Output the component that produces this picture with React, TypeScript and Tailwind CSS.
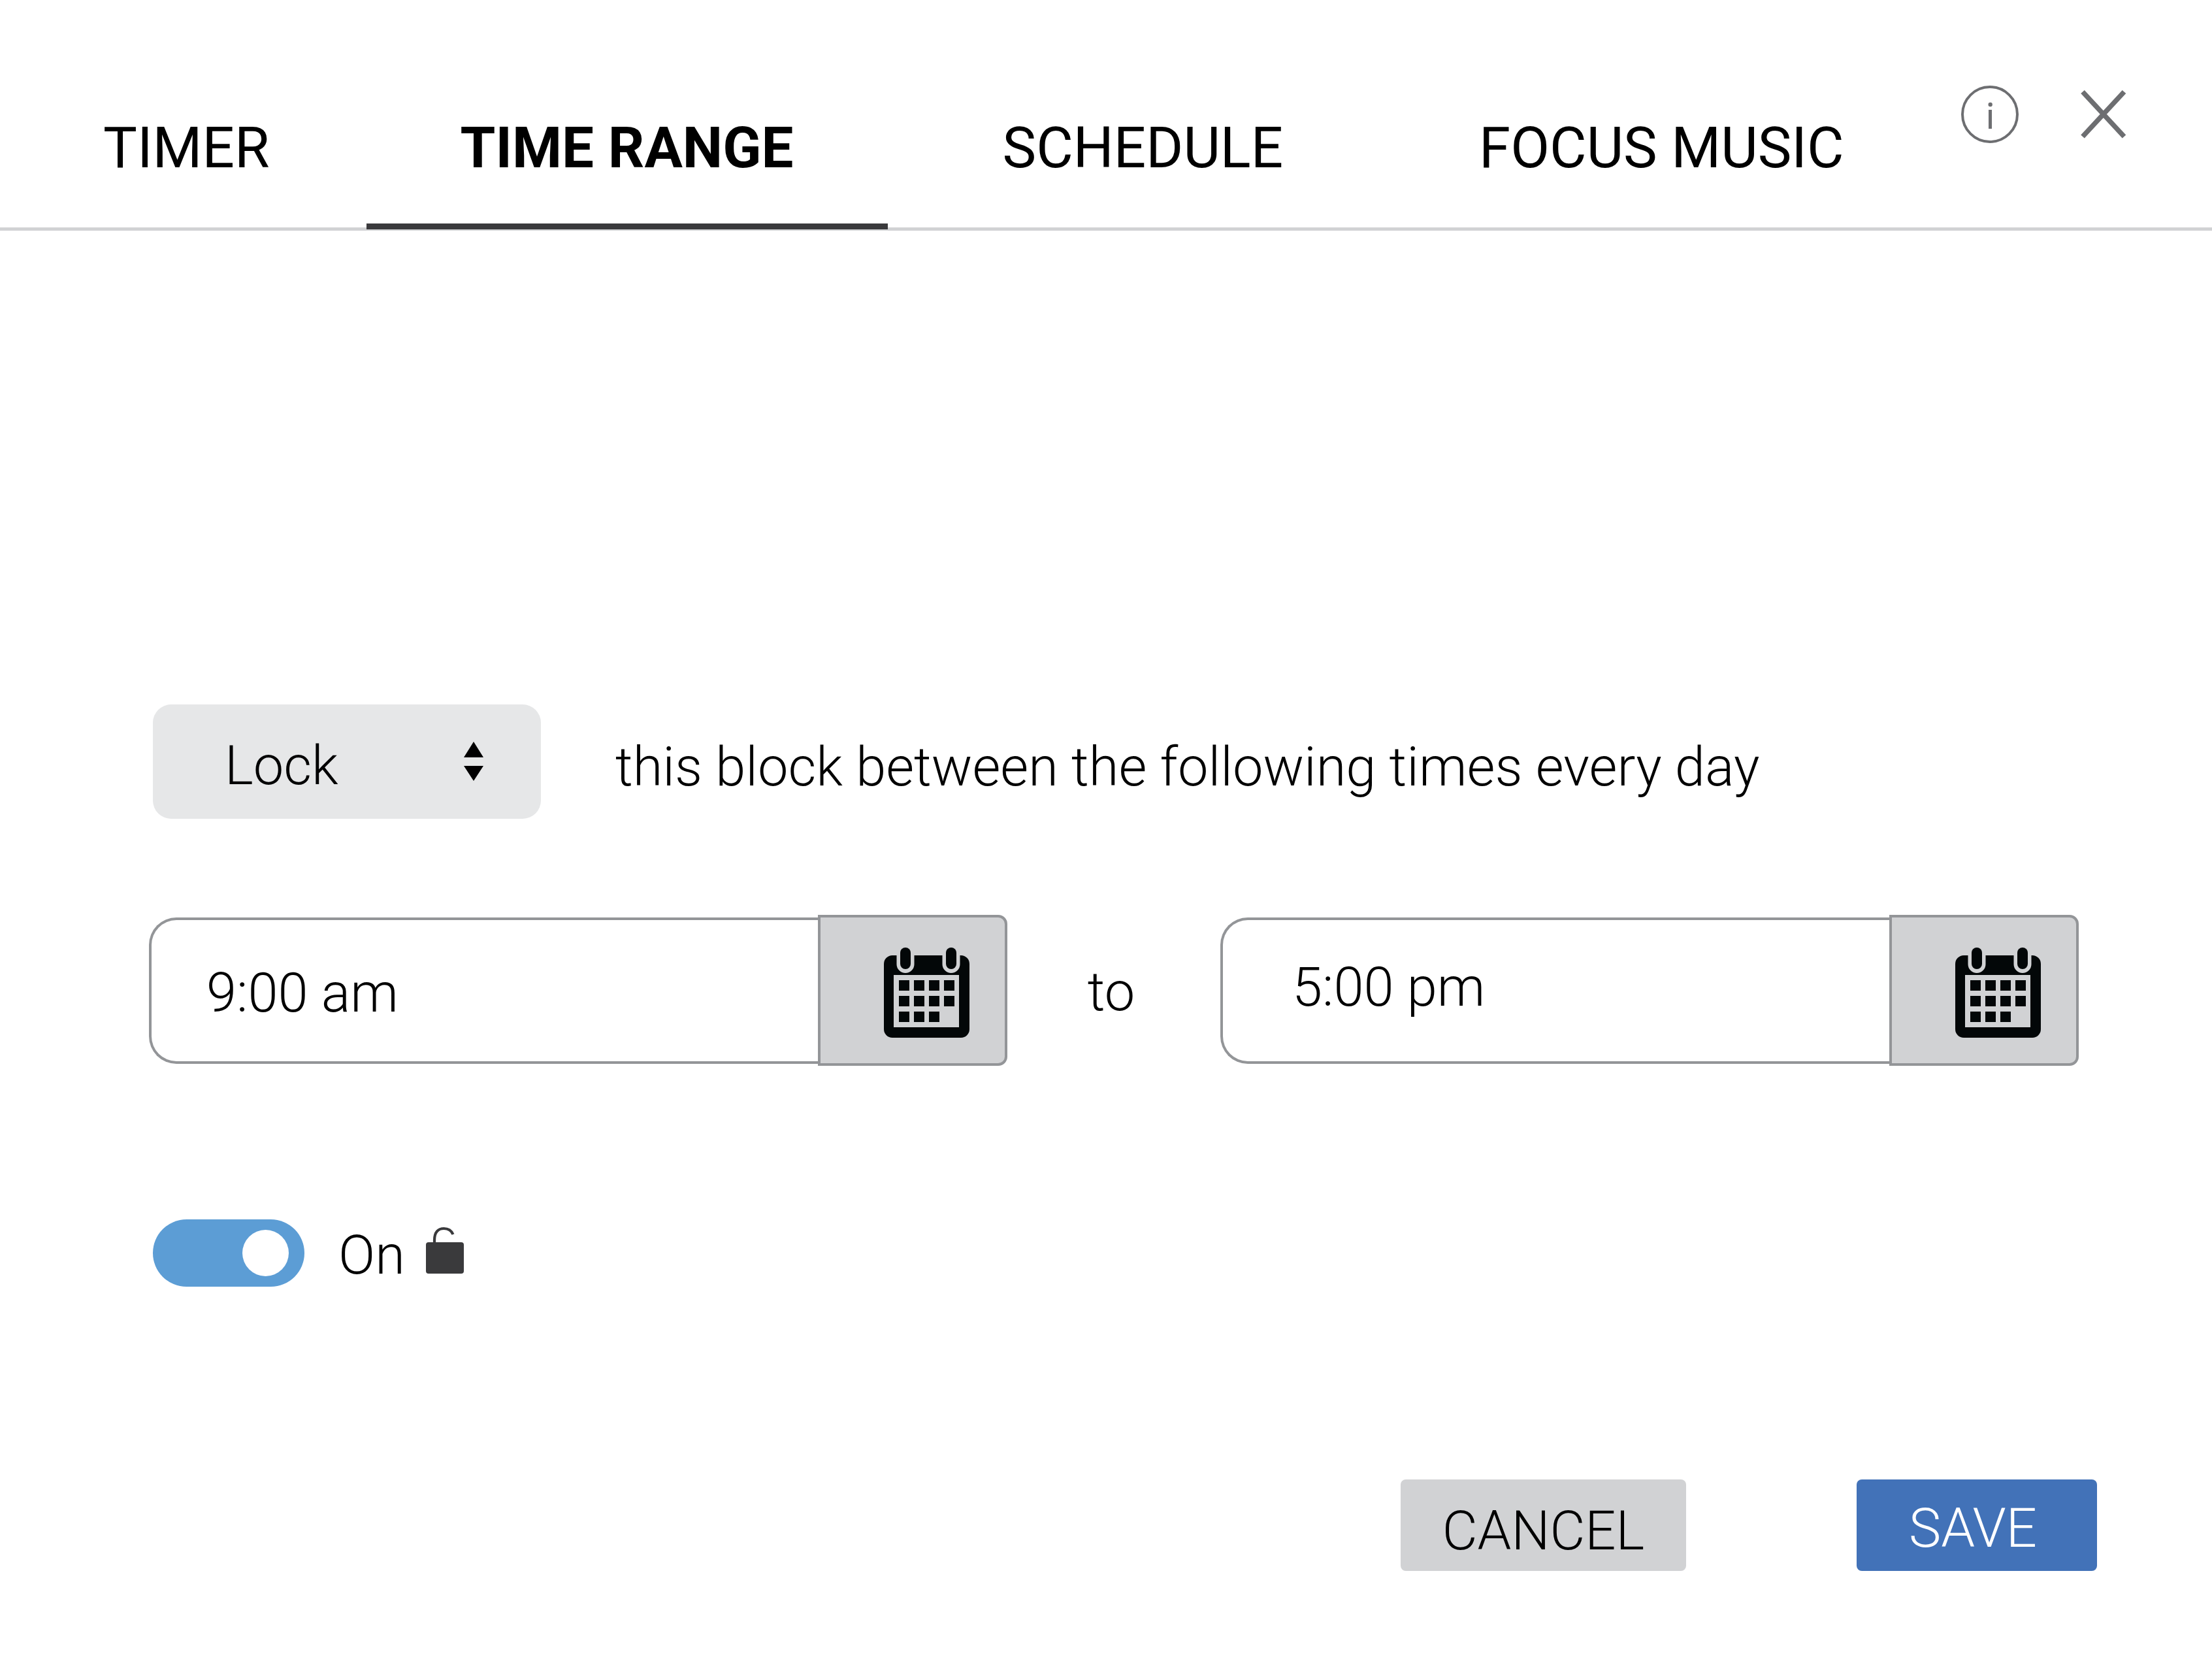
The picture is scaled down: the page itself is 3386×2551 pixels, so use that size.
import { useState } from "react";

const TABS = [
  { label: "TIMER", className: "pl-36 pr-37" },
  { label: "TIME RANGE", className: "pl-36 pr-36" },
  { label: "SCHEDULE", className: "pl-44 pr-36" },
  { label: "FOCUS MUSIC", className: "pl-39 pr-20" },
];

function InfoIcon() {
  return (
    <svg viewBox="0 0 88 88" className="size-22" aria-hidden="true">
      <circle cx="44" cy="44" r="42" fill="none" stroke="currentColor" strokeWidth="4" />
      <circle cx="44.7" cy="29" r="3.2" fill="currentColor" />
      <rect x="42" y="37" width="5" height="29" fill="currentColor" />
    </svg>
  );
}

function CloseIcon() {
  return (
    <svg viewBox="0 0 70 76" className="h-[76px] w-[70px]" aria-hidden="true">
      <path d="M3 3.5 66.5 72M66.5 3.5 3 72" fill="none" stroke="currentColor" strokeWidth="7.6" />
    </svg>
  );
}

const CALENDAR_CELLS = [
  [23, 50], [46, 50], [69, 50], [92, 50],
  [23, 74], [46, 74], [69, 74], [92, 74],
  [23, 98], [46, 98], [69, 98],
];

function CalendarIcon() {
  return (
    <svg viewBox="0 0 131 138" className="h-[138px] w-[131px]" fill="#030708" aria-hidden="true">
      <path
        fillRule="evenodd"
        d="M13 12H19.500V25.500a13.500 13.500 0 0 0 27 0V12H89.500V25.500a13.500 13.500 0 0 0 27 0V12H118a13 13 0 0 1 13 13V125a13 13 0 0 1-13 13H13a13 13 0 0 1-13-13V25a13 13 0 0 1 13-13zM15 42V122H115V42z"
      />
      <rect x="25" y="0" width="16" height="33" rx="8" />
      <rect x="95" y="0" width="16" height="33" rx="8" />
      {CALENDAR_CELLS.map(([x, y]) => (
        <rect key={`${x}-${y}`} x={x} y={y} width="16" height="16" />
      ))}
    </svg>
  );
}

function UnlockIcon() {
  return (
    <svg viewBox="0 0 58 74" className="mb-3 h-[74px] w-[58px]" aria-hidden="true">
      <path d="M13 27V23C13 10 19 5 27.500 5C34 5 39 8 41.500 14" fill="none" stroke="#3a3a3c" strokeWidth="4.200" />
      <rect y="26" width="58" height="48" rx="4" fill="#3a3a3c" />
    </svg>
  );
}

function TimeField({ label, value, inputClass }: { label: string; value: string; inputClass: string }) {
  return (
    <div className="flex min-w-0 flex-1 items-center">
      <input
        type="text"
        aria-label={label}
        defaultValue={value}
        className={`h-56 min-w-0 flex-1 rounded-l-[42px] border-4 border-r-0 border-[#939598] bg-transparent outline-none ${inputClass}`}
      />
      <button
        type="button"
        aria-label={`Choose ${label.toLowerCase()}`}
        className="flex h-[231px] w-[290px] shrink-0 items-center rounded-r-[14px] border-4 border-[#939598] bg-[#d1d2d4] pt-1.5 pl-[97px]"
      >
        <CalendarIcon />
      </button>
    </div>
  );
}

export default function App() {
  const [active, setActive] = useState("TIME RANGE");
  const [on, setOn] = useState(true);

  return (
    <div className="min-h-screen bg-white font-[Roboto,sans-serif] text-[83px] leading-24 font-light text-black">
      <header className="flex items-stretch justify-between border-b-[5px] border-[#d1d2d4] pr-[131px] pl-3.5">
        <nav role="tablist" className="-mb-[3px] flex">
          {TABS.map((tab) => (
            <button
              key={tab.label}
              type="button"
              role="tab"
              aria-selected={active === tab.label}
              onClick={() => setActive(tab.label)}
              className={`border-b-[9px] pt-[178px] pb-[68px] text-[87px] whitespace-nowrap ${tab.className} ${
                active === tab.label ? "border-[#3a3a3c] font-bold" : "border-transparent font-normal"
              }`}
            >
              {tab.label}
            </button>
          ))}
        </nav>
        <div className="mt-[131px] flex items-center gap-[95px] self-start text-[#6d6e71]">
          <button type="button" aria-label="Information">
            <InfoIcon />
          </button>
          <button type="button" aria-label="Close">
            <CloseIcon />
          </button>
        </div>
      </header>

      <main className="pt-[725px] pr-[204px] pb-36 pl-[228px]">
        <div className="flex items-center pl-1.5">
          <div className="relative w-[594px] shrink-0">
            <select
              aria-label="Block action"
              defaultValue="Lock"
              className="h-[175px] w-full appearance-none rounded-[28px] bg-[#e6e7e8] pt-3 pl-[110px] outline-none"
            >
              <option>Lock</option>
              <option>Unlock</option>
            </select>
            <svg
              viewBox="0 0 30 60"
              className="pointer-events-none absolute top-[57px] right-[88px] h-15 w-[30px]"
              aria-hidden="true"
            >
              <path d="M15 0 30 24H0zM0 37H30L15 60z" />
            </svg>
          </div>
          <p className="pt-4 pl-[114px]">this block between the following times every day</p>
        </div>

        <div className="mt-[147px] flex items-center">
          <TimeField label="Start time" value="9:00 am" inputClass="pt-2 pl-[84px]" />
          <span className="w-[326px] shrink-0 pt-1 pr-2 text-center">to</span>
          <TimeField label="End time" value="5:00 pm" inputClass="pb-2.5 pl-[106px]" />
        </div>

        <div className="mt-[235px] flex h-[103px] items-center pl-1.5">
          <input
            id="enabled"
            type="checkbox"
            role="switch"
            checked={on}
            onChange={(e) => setOn(e.target.checked)}
            className="flex h-full w-58 shrink-0 appearance-none items-center rounded-full bg-gray-400 px-6 before:block before:size-[71px] before:rounded-full before:bg-white checked:justify-end checked:bg-[#5c9dd5]"
          />
          <label htmlFor="enabled" className="flex items-center gap-8 pl-[52px]">
            <span className="pt-1.5">On</span>
            <UnlockIcon />
          </label>
        </div>

        <div className="-mr-7 mt-[295px] flex justify-end gap-[261px]">
          <button type="button" className="h-35 w-[437px] rounded-lg bg-[#d1d2d4] pt-[18px]">
            CANCEL
          </button>
          <button type="button" className="h-35 w-92 rounded-lg bg-[#4272b8] pt-2.5 pr-3 text-white">
            SAVE
          </button>
        </div>
      </main>
    </div>
  );
}
